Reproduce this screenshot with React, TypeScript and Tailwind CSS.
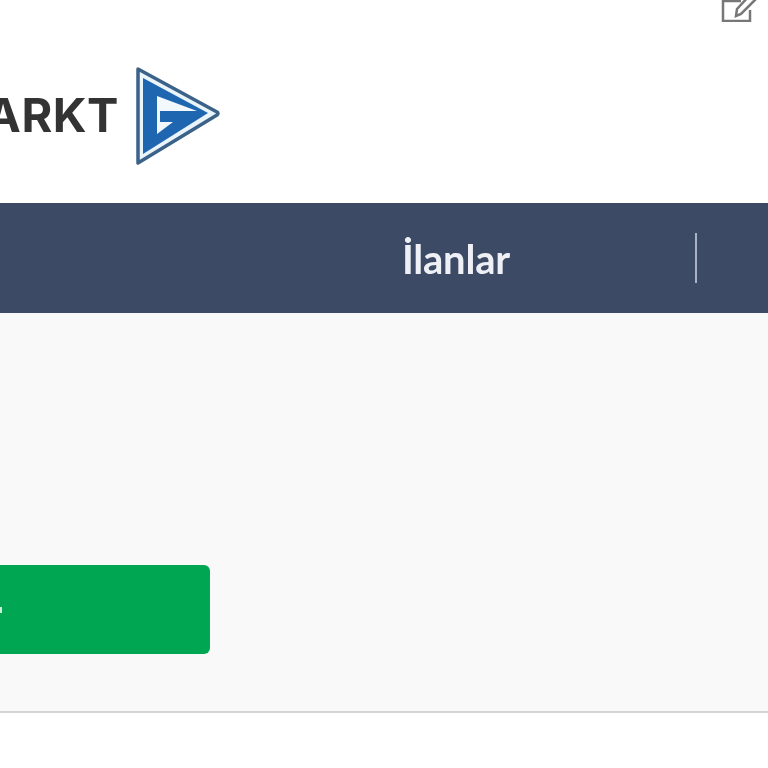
export default function App() {
  return (
    <div className="w-[768px] h-[768px] overflow-hidden bg-white flex flex-col font-['Lato','Liberation_Sans',sans-serif]">
      <header className="h-[203px] shrink-0 flex flex-col overflow-hidden">
        <div className="h-[22px] -mt-[8px] flex justify-end gap-[13px] shrink-0 mr-[-30px] blur-[0.5px]">
          <svg width="36" height="30" viewBox="0 0 36 30" fill="none" stroke="#777777" strokeWidth="2.5" className="shrink-0">
            <path d="M20 9H2v20h27V18" />
            <path d="M15 24l1-7L29 3l5 5-14 14z" />
          </svg>
          <div className="w-[28px] h-[30px] border-[3px] border-[#777777] shrink-0" />
        </div>
        <div className="mt-[52px] flex items-start w-[220px] h-[100px] justify-end">
          <span className="mt-[25px] font-['Inter','Liberation_Sans',sans-serif] font-bold text-[47px] tracking-[0.5px] leading-[48px] text-[#333333] whitespace-nowrap mr-[16px] blur-[0.6px]">ARKT</span>
          <svg width="85" height="100" viewBox="0 0 85 100" className="shrink-0 blur-[0.4px]">
            <path d="M3 3 L82 46 Q84 47.5 82 49 L3 97 Z" fill="#eaf4fb" stroke="#3b6288" strokeWidth="3.5" strokeLinejoin="round" />
            <path d="M8 12 L73 47 L8 88 Z" fill="#1f66b0" />
            <path d="M22 30 L62 45 L25 45 L25 56 L38 56 L22 68 Z" fill="#f3f8fc" />
          </svg>
        </div>
      </header>
      <nav className="h-[110px] shrink-0 bg-[#3c4a66] flex items-center justify-end">
        <span className="mt-[2px] text-[40px] font-bold leading-none text-[#eef0f5] mr-[185px] tracking-[-0.2px] blur-[0.5px]">İlanlar</span>
        <div className="w-[2px] h-[50px] bg-[#aab3c4] mr-[71px] blur-[0.4px]" />
      </nav>
      <main className="h-[398px] shrink-0 bg-[#f9f9f9] flex flex-col justify-start">
        <div className="mt-[252px] w-[210px] h-[89px] bg-[#00a651] rounded-r-[6px] flex items-center">
          <span className="w-[2px] h-[6px] bg-[#c9efd8] blur-[0.5px]" />
        </div>
      </main>
      <div className="h-[2px] shrink-0 bg-[#d4d4d4]" />
    </div>
  );
}
